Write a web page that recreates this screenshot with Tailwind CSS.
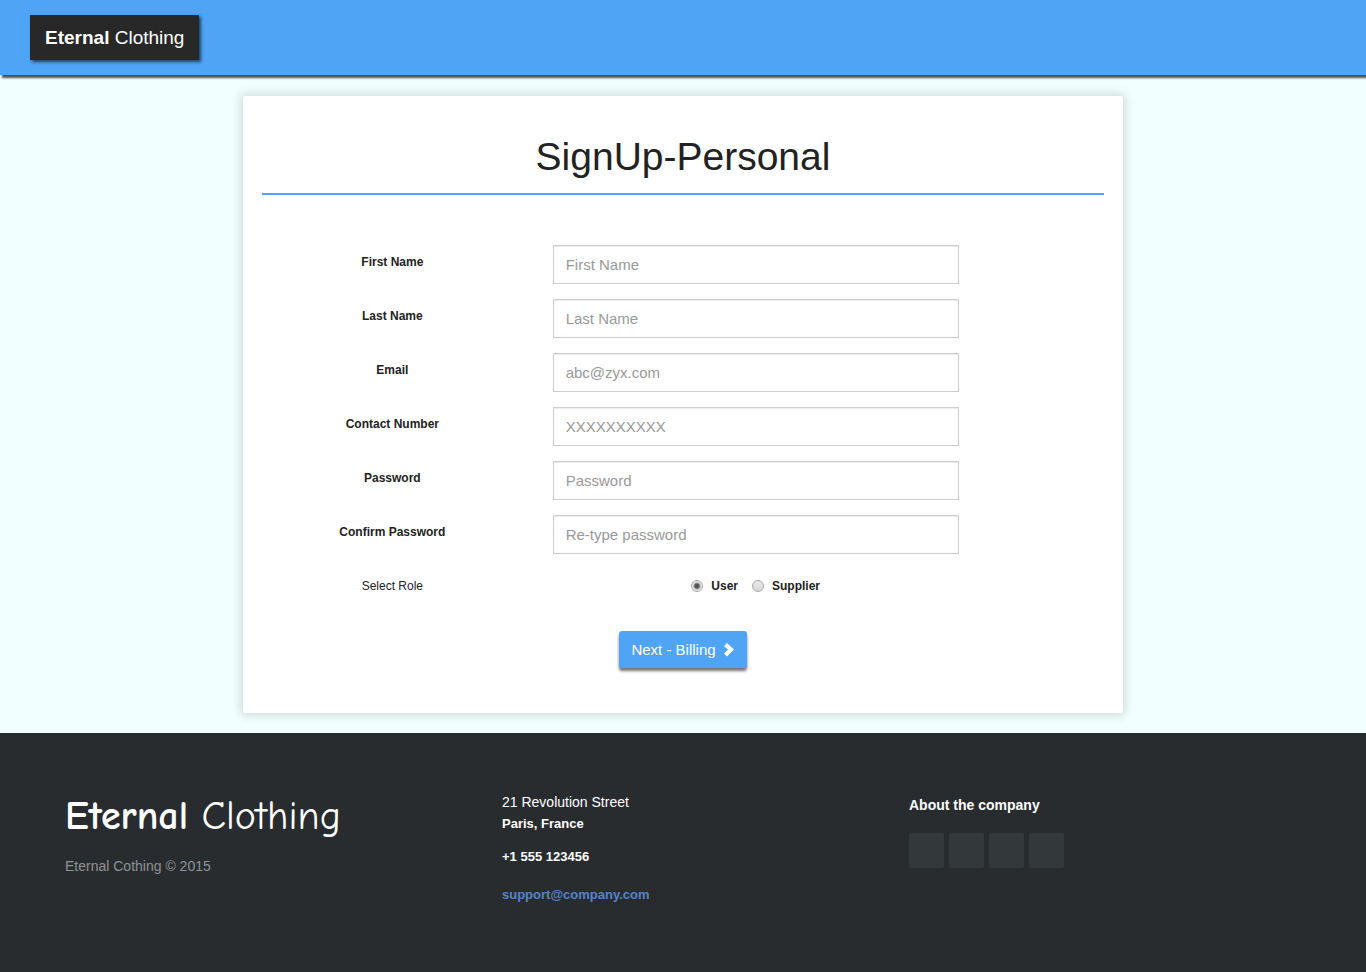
<!DOCTYPE html>
<html lang="en">
<head>
<meta charset="utf-8">
<meta name="viewport" content="width=device-width, initial-scale=1">
<title>Eternal Clothing - Sign Up</title>
<script src="https://cdn.jsdelivr.net/npm/@tailwindcss/browser@4"></script>
</head>
<body class="flex min-h-screen flex-col bg-[#f2ffff] font-['Liberation_Sans',Arial,sans-serif] text-[#222]">
<header class="flex bg-[#4fa4f5] px-[30px] py-[15px] shadow-[2px_3px_2px_#505050]">
  <a href="#" class="bg-[#282828] px-[15px] py-2 text-[19px] leading-[29px] text-white shadow-[2px_2px_3px_rgba(0,0,0,0.6)]"><strong>Eternal</strong> Clothing</a>
</header>

<main class="mx-auto mt-[21px] mb-5 w-full max-w-[880px] rounded-xs bg-white px-[19px] shadow-[0_0_10px_3px_rgba(0,0,0,0.13)]">
  <h1 class="border-b-2 border-[#4fa4f5] pt-[37px] pb-[13px] text-center text-[39px] leading-[47px]">SignUp-Personal</h1>
  <form class="-mx-[15px] flex flex-col gap-[15px] pt-[50px] pb-[45px] text-center text-xs font-bold">
    <div class="grid grid-cols-12">
      <label for="first" class="col-span-4 pt-2 leading-[18px]">First Name</label>
      <div class="col-span-6 px-[15px]"><input id="first" type="text" placeholder="First Name" class="block h-[39px] w-full border border-[#ccc] bg-white px-3 text-[15px] font-normal shadow-[inset_0_1px_1px_rgba(0,0,0,0.075)] placeholder:text-[#999]"></div>
    </div>
    <div class="grid grid-cols-12">
      <label for="last" class="col-span-4 pt-2 leading-[18px]">Last Name</label>
      <div class="col-span-6 px-[15px]"><input id="last" type="text" placeholder="Last Name" class="block h-[39px] w-full border border-[#ccc] bg-white px-3 text-[15px] font-normal shadow-[inset_0_1px_1px_rgba(0,0,0,0.075)] placeholder:text-[#999]"></div>
    </div>
    <div class="grid grid-cols-12">
      <label for="email" class="col-span-4 pt-2 leading-[18px]">Email</label>
      <div class="col-span-6 px-[15px]"><input id="email" type="email" placeholder="abc@zyx.com" class="block h-[39px] w-full border border-[#ccc] bg-white px-3 text-[15px] font-normal shadow-[inset_0_1px_1px_rgba(0,0,0,0.075)] placeholder:text-[#999]"></div>
    </div>
    <div class="grid grid-cols-12">
      <label for="contact" class="col-span-4 pt-2 leading-[18px]">Contact Number</label>
      <div class="col-span-6 px-[15px]"><input id="contact" type="tel" placeholder="XXXXXXXXXX" class="block h-[39px] w-full border border-[#ccc] bg-white px-3 text-[15px] font-normal shadow-[inset_0_1px_1px_rgba(0,0,0,0.075)] placeholder:text-[#999]"></div>
    </div>
    <div class="grid grid-cols-12">
      <label for="password" class="col-span-4 pt-2 leading-[18px]">Password</label>
      <div class="col-span-6 px-[15px]"><input id="password" type="password" placeholder="Password" class="block h-[39px] w-full border border-[#ccc] bg-white px-3 text-[15px] font-normal shadow-[inset_0_1px_1px_rgba(0,0,0,0.075)] placeholder:text-[#999]"></div>
    </div>
    <div class="grid grid-cols-12">
      <label for="confirm" class="col-span-4 pt-2 leading-[18px]">Confirm Password</label>
      <div class="col-span-6 px-[15px]"><input id="confirm" type="password" placeholder="Re-type password" class="block h-[39px] w-full border border-[#ccc] bg-white px-3 text-[15px] font-normal shadow-[inset_0_1px_1px_rgba(0,0,0,0.075)] placeholder:text-[#999]"></div>
    </div>
    <div class="grid grid-cols-12 pt-2 leading-[18px]" role="radiogroup" aria-labelledby="role-label">
      <span id="role-label" class="col-span-4 font-normal">Select Role</span>
      <div class="col-span-6 flex justify-center gap-[14px]">
        <label class="flex items-center gap-2"><input type="radio" name="role" checked class="size-3 appearance-none rounded-full border border-[#aaa] bg-linear-to-b from-[#e6e6e6] to-[#dadada] checked:bg-[radial-gradient(circle,#555_0,#555_2px,#e6e6e6_4px)]">User</label>
        <label class="flex items-center gap-2"><input type="radio" name="role" class="size-3 appearance-none rounded-full border border-[#aaa] bg-linear-to-b from-[#e6e6e6] to-[#dadada] checked:bg-[radial-gradient(circle,#555_0,#555_2px,#e6e6e6_4px)]">Supplier</label>
      </div>
    </div>
    <div class="flex justify-center pt-[21px]">
      <button type="button" class="flex h-[37px] items-center gap-[7px] rounded-[3px] bg-[#4fa4f5] px-3 text-[15px] font-normal text-white shadow-[0_3px_3px_rgba(0,0,0,0.55)]">Next - Billing
        <svg class="h-[14px] w-3" viewBox="0 0 12 14" fill="currentColor" aria-hidden="true"><path d="M4 0 11 6.500 4 13.500 1 10.500 5 6.500 1 3Z"/></svg>
      </button>
    </div>
  </form>
</main>

<footer class="grid grow grid-cols-[437fr_407fr_392fr] bg-[#292c2f] px-[65px] pt-[55px] pb-[62px] text-sm text-white">
  <div>
    <h2 class="pt-1 font-['Comic_Sans_MS','Comic_Neue','Open_Sans',sans-serif] text-[40px] leading-[48px]"><strong>Eternal</strong> Clothing</h2>
    <p class="pt-4 leading-5 text-[#8f9296]">Eternal Cothing © 2015</p>
  </div>
  <address class="not-italic">
    <p class="pt-1 leading-[21px]">21 Revolution Street<br><strong class="text-[13px]">Paris, France</strong></p>
    <p class="pt-3 text-[13px] leading-[22px] font-bold">+1 555 123456</p>
    <p class="pt-4 text-[13px] leading-[22px] font-bold"><a href="mailto:support@company.com" class="text-[#5383d3]">support@company.com</a></p>
  </address>
  <div>
    <h3 class="pt-[7px] leading-5 font-bold">About the company</h3>
    <nav class="flex gap-[5px] pt-[18px]" aria-label="Social links">
      <a href="#" aria-label="Facebook" class="size-[35px] rounded-xs bg-[#33383b]"></a>
      <a href="#" aria-label="Twitter" class="size-[35px] rounded-xs bg-[#33383b]"></a>
      <a href="#" aria-label="LinkedIn" class="size-[35px] rounded-xs bg-[#33383b]"></a>
      <a href="#" aria-label="GitHub" class="size-[35px] rounded-xs bg-[#33383b]"></a>
    </nav>
  </div>
</footer>
</body>
</html>
